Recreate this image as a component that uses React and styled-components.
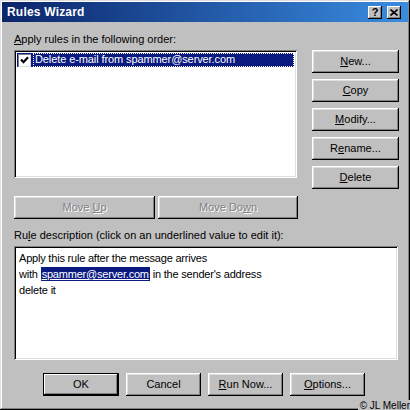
import React from 'react';
import styled, {createGlobalStyle} from 'styled-components';

const Global = createGlobalStyle`
    html, body {
        margin: 0;
        padding: 0;
        background: #c0c0c0;
    }
    * {
        box-sizing: border-box;
    }
`;

const Window = styled.div`
    position: relative;
    width: 410px;
    height: 410px;
    background: #c0c0c0;
    padding: 2px;
    box-shadow: inset -1px -1px #000, inset 1px 1px #dfdfdf, inset -2px -2px #808080, inset 2px 2px #fff;
    font-family: "Liberation Sans", Arial, sans-serif;
    font-size: 11px;
    color: #000;
    display: flex;
    flex-direction: column;
`;

const TitleBar = styled.div`
    height: 20px;
    background: linear-gradient(to right, #0a246a, #3a8ce0);
    display: flex;
    align-items: center;
    padding: 0 7px 0 5px;
    gap: 2px;
`;

const Title = styled.div`
    flex: 1;
    color: #fff;
    font-weight: bold;
    font-size: 12px;
    letter-spacing: 0.2px;
`;

const CaptionButton = styled.div`
    width: 14px;
    height: 13px;
    background: #c0c0c0;
    box-shadow: inset -1px -1px #000, inset 1px 1px #fff, inset -2px -2px #808080;
    display: flex;
    align-items: center;
    justify-content: center;
    margin-left: ${p => p.$gap || 0}px;
    font-weight: bold;
    font-size: 11px;
    line-height: 1;
`;

const Body = styled.div`
    flex: 1;
    padding: 10px 9px 0 12px;
    display: flex;
    flex-direction: column;
`;

const Label = styled.div`
    height: 16px;
    line-height: 14px;
    margin: ${p => p.$margin || '0'};
`;

const Key = styled.span`
    text-decoration: underline;
    text-underline-offset: 1px;
`;

const TopRow = styled.div`
    display: flex;
    justify-content: space-between;
    align-items: flex-start;
`;

const Field = styled.div`
    background: #fff;
    box-shadow: inset 1px 1px #808080, inset -1px -1px #fff, inset 2px 2px #000, inset -2px -2px #dfdfdf;
    padding: 3px;
`;

const ListBox = styled(Field)`
    width: 283px;
    height: 128px;
`;

const ListRow = styled.div`
    display: flex;
    align-items: center;
    height: 14px;
    background: #0a1a80;
    color: #fff;
`;

const Check = styled.div`
    width: 13px;
    height: 13px;
    background: #fff;
    border: 1px solid #808080;
    border-right-color: #dfdfdf;
    border-bottom-color: #dfdfdf;
    display: flex;
    align-items: center;
    justify-content: center;
    margin: 0 2px 0 1px;
`;

const RowText = styled.div`
    flex: 1;
    height: 14px;
    line-height: 13px;
    padding: 0 2px;
    font-size: 11px;
    letter-spacing: -0.1px;
    outline: 1px dotted #fff;
    outline-offset: -1px;
`;

const SideButtons = styled.div`
    display: flex;
    flex-direction: column;
    gap: 6px;
`;

const Button = styled.div`
    width: ${p => p.$w || 87}px;
    height: 23px;
    line-height: 23px;
    text-align: center;
    white-space: pre;
    background: #c0c0c0;
    box-shadow: ${p => p.$default
        ? 'inset -1px -1px #000, inset 1px 1px #000, inset -2px -2px #000, inset 2px 2px #fff, inset -3px -3px #808080'
        : 'inset -1px -1px #000, inset 1px 1px #fff, inset -2px -2px #808080, inset 2px 2px #dfdfdf'};
    font-size: 11px;
    color: ${p => p.$disabled ? '#808080' : '#000'};
    text-shadow: ${p => p.$disabled ? '1px 1px #fff' : 'none'};
`;

const MoveRow = styled.div`
    display: flex;
    gap: 3px;
    margin-top: 7px;
`;

const DescBox = styled(Field)`
    width: 384px;
    height: 114px;
    padding: 4px 5px;
    font-size: 11px;
    letter-spacing: -0.2px;
    line-height: 16px;
`;

const Value = styled.span`
    background: #0a1a80;
    color: #fff;
    text-decoration: underline;
    padding: 1px 1px;
`;

const Footer = styled.div`
    display: flex;
    gap: 7px;
    margin: 13px 0 0 29px;
`;

const Credit = styled.div`
    position: absolute;
    right: 0;
    bottom: -1px;
    font-size: 10px;
    color: #000;
    background: #c0c0c0;
    padding-left: 2px;
`;

function CheckMark() {
    return (
        <svg width="9" height="8" viewBox="0 0 9 8">
            <path d="M1 3.5 L3.5 6.2 L8 1.2" stroke="#000" strokeWidth="2.2" fill="none" />
        </svg>
    );
}

export default function App() {
    return (
        <Window>
            <Global/>
            <TitleBar>
                <Title>Rules Wizard</Title>
                <CaptionButton>?</CaptionButton>
                <CaptionButton $gap={3}>
                    <svg width="8" height="7" viewBox="0 0 8 7">
                        <path d="M0.5 0.5 L7.5 6.5 M7.5 0.5 L0.5 6.5" stroke="#000" strokeWidth="1.6" />
                    </svg>
                </CaptionButton>
            </TitleBar>
            <Body>
                <Label $margin="0 0 2px 0"><Key>A</Key>pply rules in the following order:</Label>
                <TopRow>
                    <ListBox>
                        <ListRow>
                            <Check><CheckMark/></Check>
                            <RowText>Delete e-mail from spammer@server.com</RowText>
                        </ListRow>
                    </ListBox>
                    <SideButtons>
                        <Button><Key>N</Key>ew...</Button>
                        <Button><Key>C</Key>opy</Button>
                        <Button><Key>M</Key>odify...</Button>
                        <Button>R<Key>e</Key>name...</Button>
                        <Button><Key>D</Key>elete</Button>
                    </SideButtons>
                </TopRow>
                <MoveRow>
                    <Button $w={141} $disabled>Move <Key>U</Key>p</Button>
                    <Button $w={140} $disabled>Move Do<Key>w</Key>n</Button>
                </MoveRow>
                <Label $margin="9px 0 2px 0">Ru<Key>l</Key>e description (click on an underlined value to edit it):</Label>
                <DescBox>
                    <div>Apply this rule after the message arrives</div>
                    <div>with <Value>spammer@server.com</Value> in the sender's address</div>
                    <div>delete it</div>
                </DescBox>
                <Footer>
                    <Button $w={76} $default>OK</Button>
                    <Button $w={75}>Cancel</Button>
                    <Button $w={75}><Key>R</Key>un Now...</Button>
                    <Button $w={75}><Key>O</Key>ptions...</Button>
                </Footer>
            </Body>
            <Credit>© JL Meller</Credit>
        </Window>
    );
}
